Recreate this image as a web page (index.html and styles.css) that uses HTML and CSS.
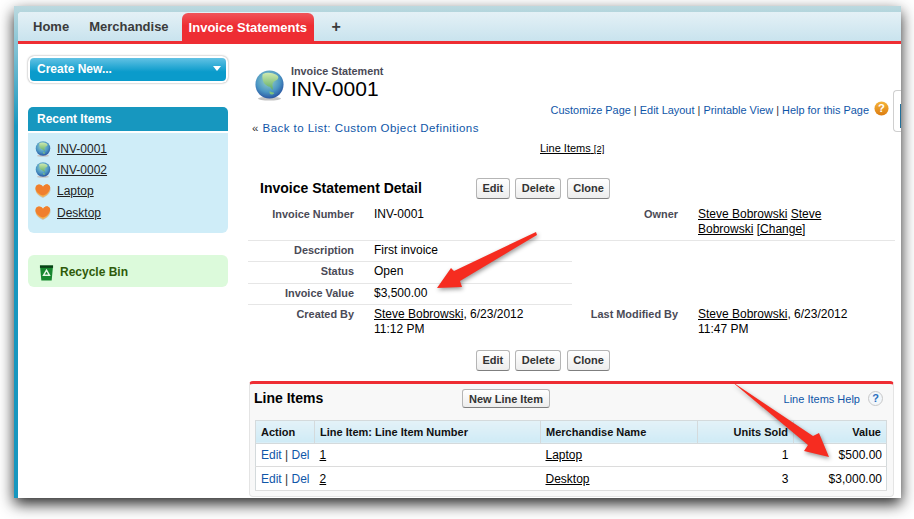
FILE: index.html
```html
<!DOCTYPE html>
<html lang="en">
<head>
  <meta charset="UTF-8" />
  <title>INV-0001 ~ Invoice Statement</title>
  <link rel="stylesheet" href="styles.css">
</head>
<body>
  <svg class="defs" width="0" height="0">
    <defs>
      <radialGradient id="globeSea" cx="45%" cy="35%" r="70%">
        <stop offset="0" stop-color="#9fd6c4" />
        <stop offset="0.6" stop-color="#4b96c4" />
        <stop offset="1" stop-color="#23499b" />
      </radialGradient>
      <linearGradient id="globeLand" x1="0" y1="0" x2="0" y2="1">
        <stop offset="0" stop-color="#cfeab0" />
        <stop offset="1" stop-color="#5cab62" />
      </linearGradient>
      <linearGradient id="helpOrange" x1="0" y1="0" x2="0" y2="1">
        <stop offset="0" stop-color="#f5b53a" />
        <stop offset="1" stop-color="#dc7c10" />
      </linearGradient>
      <symbol id="globe" viewBox="0 0 32 32">
        <ellipse cx="16" cy="29.5" rx="12" ry="2" fill="#c4c4c4" />
        <circle cx="16" cy="15" r="14.5" fill="url(#globeSea)" />
        <path d="M9 4c5-2 10-1 14 1 2 1 3 3 1 5-3 1-5 3-5 5 0 2 1 4 0 6-1-2-2-4-4-4-2-1-4-2-5-4-1-3-2-6-1-9z" fill="url(#globeLand)" />
        <path d="M16 22c2 1 4 1 5 2-1 1-3 2-4 1-1 0-1-2-1-3z" fill="#7fc27e" />
      </symbol>
      <symbol id="heart" viewBox="0 0 16 15">
        <path d="M8 14.500C4 12.500 .5 10 .5 6 .5 4 2 3.500 3.500 3.500 5.500 3.500 7 4 8 5.500 9 3 11 1.500 13 2c2 .5 3 2 2.500 4.500C15 10 11.500 13 8 14.500z" fill="#c9c2b4" />
        <path d="M8 13.500C4 12 .5 9 .5 5 .5 2.500 2.500 1 4 1c2 0 3.500 1 4 2.500C9 1.500 11 .5 12.800 1c2 .5 2.700 2.500 2.200 4C14.500 9 11.500 12.500 8 13.500z" fill="#f5b04a" />
        <path d="M8 12C4 11 .5 8 .5 4.500 .5 2 2.500 1 4 1c2 0 3.500 1 4 2.500C9 1.500 11 .5 12.800 1c2 .5 2.700 2.500 2.200 4C14.500 8 11.500 11 8 12z" fill="#f07f2e" />
      </symbol>
    </defs>
  </svg>

  <div class="window">
    <div class="page">
      <nav class="tabbar">
        <a class="tab">Home</a>
        <a class="tab">Merchandise</a>
        <a class="tab tab-active">Invoice Statements</a>
        <a class="tab tab-plus">+</a>
      </nav>

      <div class="columns">
        <aside class="sidebar">
          <div class="create-new">
            <div class="create-inner">
              <span>Create New...</span>
              <span class="caret"></span>
            </div>
          </div>

          <div class="recent-head">Recent Items</div>
          <ul class="recent-list">
            <li><svg class="recent-icon"><use href="#globe" /></svg><a>INV-0001</a></li>
            <li><svg class="recent-icon"><use href="#globe" /></svg><a>INV-0002</a></li>
            <li><svg class="recent-icon"><use href="#heart" /></svg><a>Laptop</a></li>
            <li><svg class="recent-icon"><use href="#heart" /></svg><a>Desktop</a></li>
          </ul>

          <div class="recycle">
            <svg class="bin" viewBox="0 0 16 18">
              <path d="M1 1.500h14l-1.500 16h-11z" fill="#17872f" />
              <path d="M1 1.500h14v2.500H1z" fill="#0b3f17" />
              <path d="M8 6.500l3.200 5.500H4.800z" fill="none" stroke="#e6f6e6" stroke-width="1.500" />
            </svg>
            <span>Recycle Bin</span>
          </div>
        </aside>

        <main class="content">
          <div class="page-head">
            <svg class="head-icon"><use href="#globe" /></svg>
            <div>
              <div class="head-type">Invoice Statement</div>
              <h1 class="head-name">INV-0001</h1>
            </div>
          </div>

          <div class="help-links">
            <span><a>Customize Page</a> | <a>Edit Layout</a> | <a>Printable View</a> | <a>Help for this Page</a></span>
            <svg class="help-icon" viewBox="0 0 16 16">
              <circle cx="8" cy="8" r="7.500" fill="url(#helpOrange)" />
              <text x="8" y="12" text-anchor="middle" class="help-mark">?</text>
            </svg>
          </div>

          <div class="back-link"><span class="raquo">«</span> <a>Back to List: Custom Object Definitions</a></div>

          <div class="related"><a>Line Items</a> <a class="related-count">[2]</a></div>

          <div class="detail-top">
            <h2 class="detail-title">Invoice Statement Detail</h2>
            <div class="btn-group">
              <button class="btn">Edit</button>
              <button class="btn">Delete</button>
              <button class="btn">Clone</button>
            </div>
          </div>

          <div class="detail-row detail-row-first">
            <div class="label">Invoice Number</div>
            <div class="value">INV-0001</div>
            <div class="label label-owner">Owner</div>
            <div class="value value-wide"><a>Steve Bobrowski</a> <a>Steve</a><br><a>Bobrowski</a> <a>[Change]</a></div>
          </div>
          <div class="detail-row detail-row-short"><div class="label">Description</div><div class="value">First invoice</div></div>
          <div class="detail-row detail-row-short"><div class="label">Status</div><div class="value">Open</div></div>
          <div class="detail-row detail-row-short"><div class="label">Invoice Value</div><div class="value">$3,500.00</div></div>
          <div class="detail-row detail-row-last">
            <div class="label">Created By</div>
            <div class="value"><a>Steve Bobrowski</a>, 6/23/2012<br>11:12 PM</div>
            <div class="label label-mod">Last Modified By</div>
            <div class="value value-wide"><a>Steve Bobrowski</a>, 6/23/2012<br>11:47 PM</div>
          </div>

          <div class="btn-group btn-group-bottom">
            <button class="btn">Edit</button>
            <button class="btn">Delete</button>
            <button class="btn">Clone</button>
          </div>

          <section class="related-list">
            <div class="list-head">
              <h3 class="list-title">Line Items</h3>
              <button class="btn btn-new">New Line Item</button>
              <a class="list-help">Line Items Help</a>
              <span class="list-help-icon">?</span>
            </div>
            <table class="items">
              <thead>
                <tr>
                  <th class="col-action">Action</th>
                  <th class="col-number">Line Item: Line Item Number</th>
                  <th class="col-name">Merchandise Name</th>
                  <th class="col-units num">Units Sold</th>
                  <th class="col-value num">Value</th>
                </tr>
              </thead>
              <tbody>
                <tr>
                  <td class="actions"><a>Edit</a> | <a>Del</a></td>
                  <td><a class="plain">1</a></td>
                  <td><a class="plain">Laptop</a></td>
                  <td class="num">1</td>
                  <td class="num cell-value">$500.00</td>
                </tr>
                <tr>
                  <td class="actions"><a>Edit</a> | <a>Del</a></td>
                  <td><a class="plain">2</a></td>
                  <td><a class="plain">Desktop</a></td>
                  <td class="num">3</td>
                  <td class="num cell-value">$3,000.00</td>
                </tr>
              </tbody>
            </table>
          </section>
        </main>
      </div>

      <div class="side-handle"><span></span></div>
    </div>

    <!-- annotation arrows drawn over the screenshot -->
    <svg class="arrows" viewBox="0 0 887 513" width="887" height="513">
      <g transform="translate(-14 -6)">
        <path class="arrow-fill" d="M437 288L451 268 454 271 536 232 537 235 460 281 462 287z" />
        <path class="arrow-fill" d="M731 381L813 436 819 433 829 457 804 451 808 445z" />
      </g>
    </svg>
  </div>
</body>
</html>
```

FILE: styles.css
```css
html, body {
  height: 100%;
  margin: 0;
  overflow: hidden;
}

body {
  background: #fff;
  font-family: "Liberation Sans", Arial, sans-serif;
  font-size: 12px;
  color: #000;
}

a {
  color: inherit;
}

.defs {
  position: absolute;
}

.window {
  position: relative;
  box-sizing: border-box;
  width: 887px;
  height: 492px;
  margin: 6px 0 0 14px;
  padding: 6px 0 0 4px;
  background: linear-gradient(#bcd9df, #1797bf 120px);
  box-shadow: 0 6px 14px rgba(0,0,0,0.85);
}

.page {
  position: relative;
  height: 486px;
  overflow: hidden;
  background: #fff;
  border-top-left-radius: 4px;
}

/* tabs */
.tabbar {
  display: flex;
  align-items: flex-end;
  box-sizing: border-box;
  height: 32px;
  padding-left: 8px;
  background: linear-gradient(#e4f1f6, #c9e3ee);
  border-bottom: 3px solid #ee2d33;
}

.tab {
  padding: 0 7px 6px;
  margin-right: 6px;
  font-size: 13px;
  font-weight: bold;
  line-height: 16px;
  color: #3b3b3b;
}

.tab-active {
  box-sizing: border-box;
  width: 132px;
  height: 28px;
  margin-right: 11px;
  padding: 7px 0 0 7px;
  border-radius: 6px 6px 0 0;
  background: linear-gradient(#f0555a, #ee2d33 45%);
  color: #fff;
}

.tab-plus {
  font-size: 16px;
}

.columns {
  display: flex;
}

/* sidebar */
.sidebar {
  box-sizing: border-box;
  width: 230px;
  padding: 12px 0 0 10px;
  flex: none;
}

.create-new {
  box-sizing: border-box;
  width: 200px;
  height: 27px;
  padding: 2px;
  border-radius: 6px;
  background: #fff;
  box-shadow: 0 0 2px rgba(0,0,0,0.45);
}

.create-inner {
  display: flex;
  justify-content: space-between;
  align-items: center;
  box-sizing: border-box;
  height: 23px;
  padding: 0 7px 2px;
  border-radius: 4px;
  background: linear-gradient(#62c2e4, #0a9bcb 60%);
  color: #fff;
  font-weight: bold;
}

.caret {
  border-left: 4px solid transparent;
  border-right: 4px solid transparent;
  border-top: 5px solid #fff;
  margin-right: -2px;
}

.recent-head {
  box-sizing: border-box;
  width: 200px;
  height: 24px;
  margin-top: 24px;
  padding-left: 9px;
  border-radius: 5px 5px 0 0;
  background: #1797bf;
  color: #fff;
  font-weight: bold;
  line-height: 24px;
}

.recent-list {
  box-sizing: border-box;
  width: 200px;
  height: 100px;
  margin: 2px 0 0;
  padding: 5px 7px;
  list-style: none;
  border-radius: 0 0 6px 6px;
  background: #cfedf8;
}

.recent-list li {
  display: flex;
  align-items: center;
  gap: 6px;
  height: 21.300px;
}

.recent-list a {
  text-decoration: underline;
  color: #222;
}

.recent-icon {
  width: 16px;
  height: 16px;
}

.recycle {
  display: flex;
  align-items: center;
  gap: 6px;
  box-sizing: border-box;
  width: 200px;
  height: 32px;
  margin-top: 22px;
  padding: 2px 0 0 11px;
  border-radius: 6px;
  background: #dcfadb;
  color: #2f5a0a;
  font-weight: bold;
}

.bin {
  width: 15px;
  height: 17px;
}

/* main column */
.content {
  position: relative;
  flex: 1;
  padding-right: 6px;
}

.page-head {
  display: flex;
  align-items: flex-start;
  gap: 6px;
  margin: 20px 0 0 6px;
}

.head-icon {
  width: 31px;
  height: 33px;
  margin-top: 5px;
}

.head-type {
  font-size: 10.800px;
  font-weight: bold;
  line-height: 14px;
  color: #4a4a56;
}

.head-name {
  margin: -1px 0 0;
  font-size: 21px;
  font-weight: normal;
  line-height: 24px;
}

.help-links {
  display: flex;
  justify-content: flex-end;
  align-items: center;
  height: 16px;
  margin: 0 6px 0 0;
  font-size: 10.950px;
  color: #333;
}

.help-links a,
.back-link a,
.list-help,
.actions a {
  color: #0f56a8;
}

.help-icon {
  width: 15px;
  height: 15px;
  margin-left: 5px;
  margin-top: -4px;
}

.help-mark {
  font-family: "Liberation Sans", Arial, sans-serif;
  font-size: 12px;
  font-weight: bold;
  fill: #fff;
}

.back-link {
  margin: 2px 0 0 4px;
  line-height: 16px;
  font-size: 11.500px;
  letter-spacing: 0.45px;
}

.raquo {
  color: #333;
}

.related {
  margin-top: 5px;
  padding-left: 292px;
  font-size: 11px;
  line-height: 14px;
  text-decoration: underline;
}

.related-count {
  font-size: 9.500px;
}

.detail-top {
  display: flex;
  align-items: center;
  height: 22px;
  margin-top: 21px;
}

.detail-title {
  width: 216px;
  margin: 0;
  padding-left: 12px;
  font-size: 14px;
  line-height: 20px;
}

.btn-group {
  display: flex;
  gap: 5.500px;
}

.btn-group-bottom {
  margin: 10px 0 0 228px;
}

.btn {
  height: 21px;
  padding: 0 5.500px;
  border: 1px solid #b5b5b5;
  border-bottom-color: #7f7f7f;
  border-radius: 3px;
  background: linear-gradient(#fff, #ededed);
  font-family: "Liberation Sans", Arial, sans-serif;
  font-size: 11px;
  font-weight: bold;
  color: #333;
}

.detail-row {
  display: flex;
  line-height: 15px;
  box-sizing: border-box;
}

.detail-row-first {
  height: 42px;
  padding-top: 8px;
  border-bottom: 1px solid #e6e6e6;
}

.detail-row-short {
  width: 324px;
  height: 21.300px;
  padding-top: 2px;
  border-bottom: 1px solid #e6e6e6;
}

.detail-row-last {
  height: 35px;
  padding-top: 2px;
}

.label {
  box-sizing: border-box;
  width: 106px;
  flex: none;
  text-align: right;
  font-size: 10.900px;
  font-weight: bold;
  color: #4a4a56;
}

.value {
  width: 166px;
  flex: none;
  margin-left: 20px;
}

.value a,
.plain {
  text-decoration: underline;
}

.label-owner,
.label-mod {
  width: 138px;
}

.value-wide {
  width: 160px;
}

/* line items list */
.related-list {
  box-sizing: border-box;
  height: 116px;
  margin: 10px 1px 0 1px;
  padding: 0 6px 0 5px;
  border-top: 3px solid #ee2d33;
  border-left: 1px solid #e4e4e4;
  border-right: 1px solid #e4e4e4;
  border-bottom: 1px solid #e4e4e4;
  border-radius: 4px;
  background: #f8f8f8;
}

.list-head {
  display: flex;
  align-items: center;
  height: 30px;
  margin-bottom: 6px;
}

.list-title {
  width: 208px;
  margin: 0 0 2px -1px;
  font-size: 14px;
}

.btn-new {
  height: 19px;
  padding: 0 6px;
}

.list-help {
  margin-left: auto;
  font-size: 11px;
}

.list-help-icon {
  display: block;
  box-sizing: border-box;
  width: 15px;
  height: 15px;
  margin: 0 4px 0 8px;
  border: 1px solid #c8c8c8;
  border-radius: 50%;
  background: #f2f6fa;
  color: #2a6fbe;
  font-size: 11px;
  font-weight: bold;
  line-height: 13px;
  text-align: center;
}

.items {
  width: 632px;
  border-collapse: collapse;
  background: #fff;
  table-layout: fixed;
  border: 1px solid #d4dadc;
}

.items th {
  box-sizing: border-box;
  height: 23px;
  padding: 0 5px;
  background: linear-gradient(#e4f2f8, #cfebf6);
  border: 1px solid #d4dadc;
  border-top: 0;
  font-size: 11px;
  text-align: left;
  color: #111;
}

.items td {
  box-sizing: border-box;
  height: 23.500px;
  padding: 0 5px;
  border-bottom: 1px solid #dcdcdc;
}

.col-action { width: 59px; }
.col-number { width: 226px; }
.col-name { width: 157px; }
.col-units { width: 96px; }

.items .num {
  text-align: right;
}

.items .cell-value {
  padding-right: 4px;
}

.actions {
  color: #333;
}

/* the little collapse tab at the right edge */
.side-handle {
  position: absolute;
  top: 78px;
  right: 0;
  box-sizing: border-box;
  width: 8px;
  height: 42px;
  padding: 13px 0 0 6px;
  border: 1px solid #cfcfcf;
  border-right: 0;
  border-radius: 4px 0 0 4px;
  background: #fff;
}

.side-handle span {
  display: block;
  width: 2px;
  height: 24px;
  background: #1f6f9a;
}

.arrows {
  position: absolute;
  left: 0;
  top: 0;
  pointer-events: none;
  filter: drop-shadow(1px 2px 2px rgba(0,0,0,0.4));
}

.arrow-fill {
  fill: #f62c20;
}
```
